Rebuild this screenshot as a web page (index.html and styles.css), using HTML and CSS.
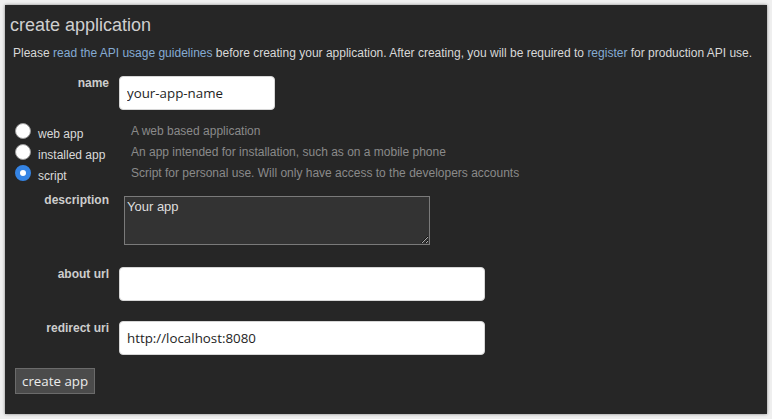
FILE: index.html
```html
<!DOCTYPE html>
<html>
<head>
<meta charset="utf-8">
<link rel="stylesheet" href="styles.css">
</head>
<body>
<div class="panel">
  <h1 class="title">create application</h1>
  <p class="intro">Please <a href="#">read the API usage guidelines</a> before creating your application. After creating, you will be required to <a href="#">register</a> for production API use.</p>

  <div class="row row-name">
    <label class="lbl">name</label>
    <input class="txt txt-short" type="text" value="your-app-name">
  </div>

  <div class="radios">
    <div class="opt"><input class="rad" type="radio" name="kind"><span class="opt-label">web app</span></div>
    <div class="desc">A web based application</div>
    <div class="opt"><input class="rad" type="radio" name="kind"><span class="opt-label">installed app</span></div>
    <div class="desc">An app intended for installation, such as on a mobile phone</div>
    <div class="opt"><input class="rad" type="radio" name="kind" checked><span class="opt-label">script</span></div>
    <div class="desc">Script for personal use. Will only have access to the developers accounts</div>
  </div>

  <div class="row row-desc">
    <label class="lbl">description</label>
    <textarea class="area">Your app</textarea>
  </div>

  <div class="row row-about">
    <label class="lbl">about url</label>
    <input class="txt txt-long" type="text" value="">
  </div>

  <div class="row row-redirect">
    <label class="lbl">redirect uri</label>
    <input class="txt txt-long" type="text" value="http://localhost:8080">
  </div>

  <button class="btn" type="button">create app</button>
</div>
</body>
</html>
```
FILE: styles.css
```css
html, body {
  margin: 0;
  padding: 0;
  background: #efefef;
}

body {
  padding: 5px;
  height: 419px;
  box-sizing: border-box;
  font-family: "Liberation Sans", Arial, sans-serif;
}

.panel {
  background: #262626;
  height: 409px;
  box-sizing: border-box;
  padding: 10px 0 0 0;
  box-shadow: 0 0 3px rgba(0, 0, 0, 0.45);
}

.title {
  margin: 0 0 0 5px;
  font-size: 18px;
  font-weight: normal;
  line-height: 21px;
  color: #cfcfcf;
}

.intro {
  margin: 10px 0 0 8px;
  font-size: 12px;
  line-height: 14px;
  color: #d8d8d8;
}

.intro a {
  color: #85abd3;
  text-decoration: none;
}

.row {
  display: flex;
  align-items: flex-start;
}

.lbl {
  width: 104px;
  flex: none;
  text-align: right;
  font-size: 12px;
  font-weight: bold;
  line-height: 14px;
  color: #cdcdcd;
  margin-right: 10px;
}

.row-name { margin-top: 16px; }
.row-desc { margin-top: 9px; }
.row-about { margin-top: 22px; }
.row-redirect { margin-top: 20px; }

.txt {
  margin: 0;
  height: 34px;
  box-sizing: border-box;
  border: 1px solid #d6d6d6;
  border-radius: 4px;
  background: #ffffff;
  padding: 0 7px;
  font-family: "Open Sans", "Noto Sans", sans-serif;
  font-size: 13.33px;
  color: #1e1e1e;
  outline: none;
}

.txt-short { width: 156px; }
.txt-long { width: 366px; }

.radios {
  margin: 11px 0 0 10px;
  display: grid;
  grid-template-columns: 116px 1fr;
  grid-auto-rows: 21px;
}

.opt {
  display: flex;
  align-items: flex-start;
}

.rad {
  appearance: none;
  -webkit-appearance: none;
  margin: 2px 7px 0 0;
  width: 16px;
  height: 16px;
  border-radius: 50%;
  background: #ffffff;
  border: 1px solid #9a9a9a;
  box-sizing: border-box;
  flex: none;
}

.rad:checked {
  background: #ffffff;
  border: 5px solid #3584e4;
}

.opt-label {
  font-size: 12px;
  line-height: 21px;
  padding-top: 3px;
  color: #dadada;
}

.desc {
  font-size: 12px;
  line-height: 21px;
  color: #8a8a8a;
}

.area {
  margin: 3px 0 0 5px;
  width: 306px;
  height: 49px;
  box-sizing: border-box;
  background: #333333;
  border: 1px solid #7a7a7a;
  border-radius: 0;
  padding: 2px 2px;
  font-family: "Liberation Sans", Arial, sans-serif;
  font-size: 13px;
  line-height: 15px;
  color: #dedede;
  outline: none;
}

.btn {
  display: block;
  margin: 13px 0 0 10px;
  height: 26px;
  padding: 0 6px;
  background: #4b4b4b;
  border: 1px solid #6b6b6b;
  border-radius: 0;
  color: #ececec;
  font-family: "Open Sans", "Noto Sans", sans-serif;
  font-size: 13.33px;
}
```
